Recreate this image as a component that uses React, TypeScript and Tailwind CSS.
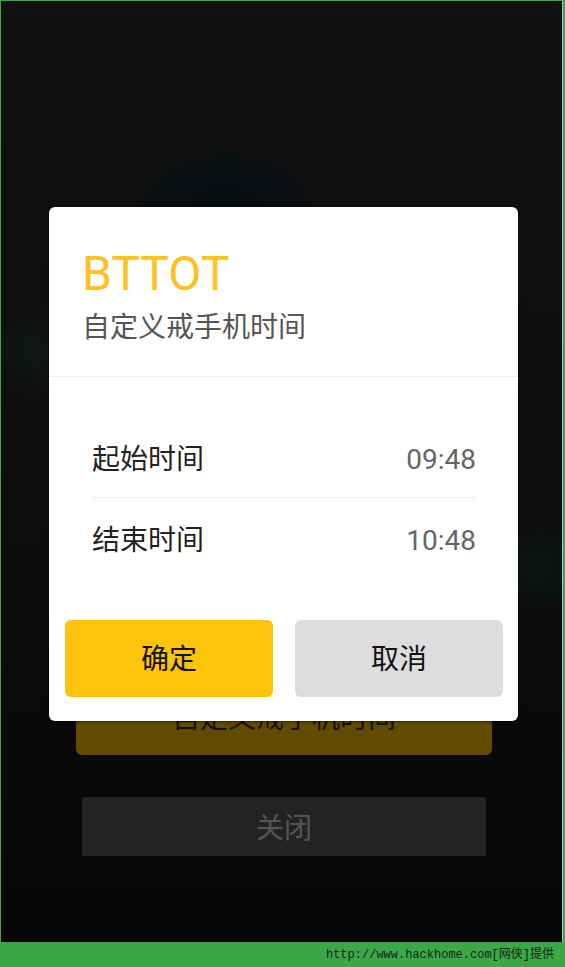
import React from "react";

const cjk = "font-['Roboto','Noto_Sans_CJK_SC',sans-serif]";

function TimeRow({ label, value, last }: { label: string; value: string; last?: boolean }) {
  return (
    <div
      className={`h-[80px] flex items-center justify-between ${
        last ? "pt-[6px]" : "pt-[4px] border-b border-[#efefef]"
      }`}
    >
      <span className="text-[28px] leading-none text-[#222]">{label}</span>
      <span className="text-[28px] leading-none text-[#666]">{value}</span>
    </div>
  );
}

export default function App() {
  return (
    <div className={`w-[565px] h-[967px] bg-[#3aa845] flex flex-col ${cjk}`}>
      <div className="flex pt-px pl-px h-[942px]">
        {/* phone screen */}
        <div className="relative w-[561px] h-[941px] overflow-hidden bg-[linear-gradient(180deg,#111111_0%,#0d0d0d_50%,#060606_100%)]">
          {/* faint glows behind the dialog */}
          <div className="absolute inset-0 bg-[radial-gradient(ellipse_110px_80px_at_225px_215px,rgba(0,12,18,0.9)_0px,rgba(0,0,0,0)_100%),radial-gradient(circle_at_35px_350px,rgba(20,60,52,0.22)_0px,rgba(0,0,0,0)_50px),radial-gradient(circle_at_535px_565px,rgba(20,60,56,0.22)_0px,rgba(0,0,0,0)_50px)]" />

          {/* dimmed app content */}
          <div className="relative flex flex-col pt-[686px]">
            <div className="ml-[75px] w-[416px] h-[68px] rounded-[6px] bg-[#624b00] flex items-center justify-center">
              <span className="text-[28px] leading-none text-[#161100] -translate-y-[2px]">自定义戒手机时间</span>
            </div>
            <div className="ml-[81px] mt-[42px] w-[404px] h-[59px] rounded-[2px] bg-[#232323] flex items-center justify-center">
              <span className="text-[28px] leading-none text-[#555] translate-y-[2px]">关闭</span>
            </div>
          </div>

          {/* dialog */}
          <div className="absolute left-[48px] top-[206px] w-[469px] rounded-[6px] bg-white shadow-[0_1px_3px_rgba(0,0,0,0.5)] flex flex-col">
            <div className="pl-[33px] pt-[43px] pb-[34px] border-b border-[#eeeeee]">
              <div className="text-[48px] leading-[48px] text-[#fdc21f]">BTTOT</div>
              <div className="mt-[16px] text-[28px] leading-[28px] text-[#555]">自定义戒手机时间</div>
            </div>
            <div className="pt-[41px] pl-[43px] pr-[42px]">
              <TimeRow label="起始时间" value="09:48" />
              <TimeRow label="结束时间" value="10:48" last />
            </div>
            <div className="flex gap-[22px] pl-[16px] pr-[15px] pt-[42px] pb-[24px]">
              <button className="flex-1 h-[77px] rounded-[6px] bg-[#fec30b] text-[28px] text-[#111] pt-[3px]">确定</button>
              <button className="flex-1 h-[77px] rounded-[6px] bg-[#dddddd] text-[28px] text-[#111] pt-[3px]">取消</button>
            </div>
          </div>
        </div>
        <div className="w-px h-[941px] bg-[#9fc3d6]" />
      </div>

      {/* watermark bar */}
      <div className="h-[25px] flex items-center justify-end pr-[11px]">
        <span className="font-['Liberation_Mono','Noto_Sans_CJK_SC',monospace] text-[12px] leading-none text-[#1c1c1c]">
          http://www.hackhome.com[网侠]提供
        </span>
      </div>
    </div>
  );
}
